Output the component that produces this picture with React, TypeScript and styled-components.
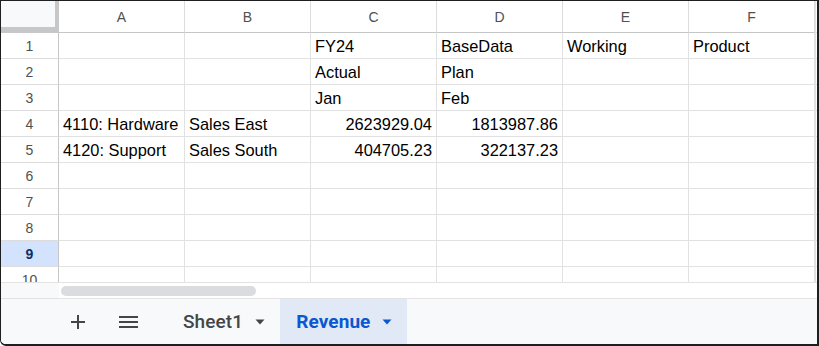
import { createGlobalStyle, styled } from "styled-components";

const GlobalStyle = createGlobalStyle`
  html, body {
    margin: 0;
    padding: 0;
    background: #ffffff;
  }
`;

const Frame = styled.div`
  width: 819px;
  height: 346px;
  box-sizing: border-box;
  border-top: 1px solid #1f1f1f;
  border-left: 1px solid #1f1f1f;
  border-right: 2px solid #1f1f1f;
  border-bottom: 2px solid #1f1f1f;
  border-bottom-left-radius: 6px;
  display: flex;
  flex-direction: column;
  overflow: hidden;
  background: #ffffff;
  font-family: "Liberation Sans", Arial, sans-serif;
`;

const SheetArea = styled.div`
  height: 282px;
  overflow: hidden;
  border-bottom: 1px solid #e3e3e3;
  box-sizing: border-box;
`;

const Grid = styled.div`
  display: grid;
  grid-template-columns: 58px repeat(6, 126px) 2px;
  grid-template-rows: 32px;
  grid-auto-rows: 26px;
`;

const Corner = styled.div`
  box-sizing: border-box;
  background: #f8f9fa;
  border-right: 4px solid #c7c7c7;
  border-bottom: 6px solid #c7c7c7;
`;

const ColHead = styled.div`
  box-sizing: border-box;
  border-right: 1px solid #dcdcdc;
  border-bottom: 1px solid #c4c7c5;
  display: flex;
  align-items: center;
  justify-content: center;
  font-size: 14px;
  color: #505050;
  padding-top: 1px;
`;

const RowHead = styled.div<{ $active?: boolean }>`
  box-sizing: border-box;
  border-right: 1px solid #c4c7c5;
  border-bottom: 1px solid #dcdcdc;
  display: flex;
  align-items: center;
  justify-content: center;
  font-size: 14px;
  color: ${(p) => (p.$active ? "#0b2e66" : "#505050")};
  font-weight: ${(p) => (p.$active ? 700 : 400)};
  background: ${(p) => (p.$active ? "#d3e3fd" : "#ffffff")};
`;

const Cell = styled.div<{ $num?: boolean }>`
  box-sizing: border-box;
  border-right: 1px solid #e1e1e1;
  border-bottom: 1px solid #e1e1e1;
  display: flex;
  align-items: center;
  justify-content: ${(p) => (p.$num ? "flex-end" : "flex-start")};
  padding: 2px 4px 0 4px;
  font-size: 16.4px;
  color: #000000;
  white-space: nowrap;
  overflow: hidden;
`;

const Edge = styled.div`
  border-bottom: 1px solid #e1e1e1;
  border-left: 1px solid #e1e1e1;
  box-sizing: border-box;
`;

const ScrollRow = styled.div`
  height: 15px;
  display: flex;
  align-items: center;
`;

const ScrollGutter = styled.div`
  width: 58px;
  height: 100%;
  background: #f8f9fa;
`;

const Thumb = styled.div`
  margin-left: 2px;
  width: 195px;
  height: 10px;
  border-radius: 5px;
  background: #dadce0;
`;

const BottomBar = styled.div`
  flex: 1;
  background: #f8f9fa;
  border-top: 1px solid #e3e3e3;
  display: flex;
  align-items: stretch;
  padding-left: 60px;
  font-family: Roboto, "Noto Sans", sans-serif;
`;

const IconButton = styled.div`
  width: 34px;
  display: flex;
  align-items: center;
  justify-content: center;
  margin-right: 16px;
`;

const TabList = styled.div`
  display: flex;
  align-items: stretch;
  margin-left: 6px;
`;

const Tab = styled.div<{ $active?: boolean }>`
  display: flex;
  align-items: center;
  gap: 12px;
  padding: 0 15px 0 16px;
  background: ${(p) => (p.$active ? "#e1e9f7" : "transparent")};
  color: ${(p) => (p.$active ? "#0b57d0" : "#444746")};
  font-size: 19px;
  font-weight: ${(p) => (p.$active ? 700 : 500)};
  letter-spacing: 0.1px;
`;

const Caret = ({ color }: { color: string }) => (
  <svg width="10" height="6" viewBox="0 0 10 6">
    <path d="M0.5 0.5 L9.5 0.5 L5 5.5 Z" fill={color} />
  </svg>
);

const cols = ["A", "B", "C", "D", "E", "F"];

type CellData = { text: string; num?: boolean };

const data: CellData[][] = [
  [{ text: "" }, { text: "" }, { text: "FY24" }, { text: "BaseData" }, { text: "Working" }, { text: "Product" }],
  [{ text: "" }, { text: "" }, { text: "Actual" }, { text: "Plan" }, { text: "" }, { text: "" }],
  [{ text: "" }, { text: "" }, { text: "Jan" }, { text: "Feb" }, { text: "" }, { text: "" }],
  [
    { text: "4110: Hardware" },
    { text: "Sales East" },
    { text: "2623929.04", num: true },
    { text: "1813987.86", num: true },
    { text: "" },
    { text: "" },
  ],
  [
    { text: "4120: Support" },
    { text: "Sales South" },
    { text: "404705.23", num: true },
    { text: "322137.23", num: true },
    { text: "" },
    { text: "" },
  ],
];

export default function App() {
  const rows = Array.from({ length: 10 }, (_, i) => i + 1);
  return (
    <>
      <GlobalStyle />
      <Frame>
        <SheetArea>
          <Grid>
            <Corner />
            {cols.map((c) => (
              <ColHead key={c}>{c}</ColHead>
            ))}
            <Edge />
            {rows.map((r) => {
              const row = data[r - 1];
              return [
                <RowHead key={`h${r}`} $active={r === 9}>
                  {r}
                </RowHead>,
                ...cols.map((c, ci) => {
                  const cell = row ? row[ci] : undefined;
                  return (
                    <Cell key={`${c}${r}`} $num={cell?.num}>
                      {cell?.text}
                    </Cell>
                  );
                }),
                <Edge key={`e${r}`} />,
              ];
            })}
          </Grid>
        </SheetArea>
        <ScrollRow>
          <ScrollGutter />
          <Thumb />
        </ScrollRow>
        <BottomBar>
          <IconButton>
            <svg width="16" height="16" viewBox="0 0 16 16">
              <path d="M8 1 V15 M1 8 H15" stroke="#444746" strokeWidth="2" />
            </svg>
          </IconButton>
          <IconButton>
            <svg width="19" height="12" viewBox="0 0 19 12">
              <path d="M0 1 H19 M0 6 H19 M0 11 H19" stroke="#444746" strokeWidth="1.8" />
            </svg>
          </IconButton>
          <TabList>
            <Tab>
              Sheet1
              <Caret color="#444746" />
            </Tab>
            <Tab $active>
              Revenue
              <Caret color="#0b57d0" />
            </Tab>
          </TabList>
        </BottomBar>
      </Frame>
    </>
  );
}
